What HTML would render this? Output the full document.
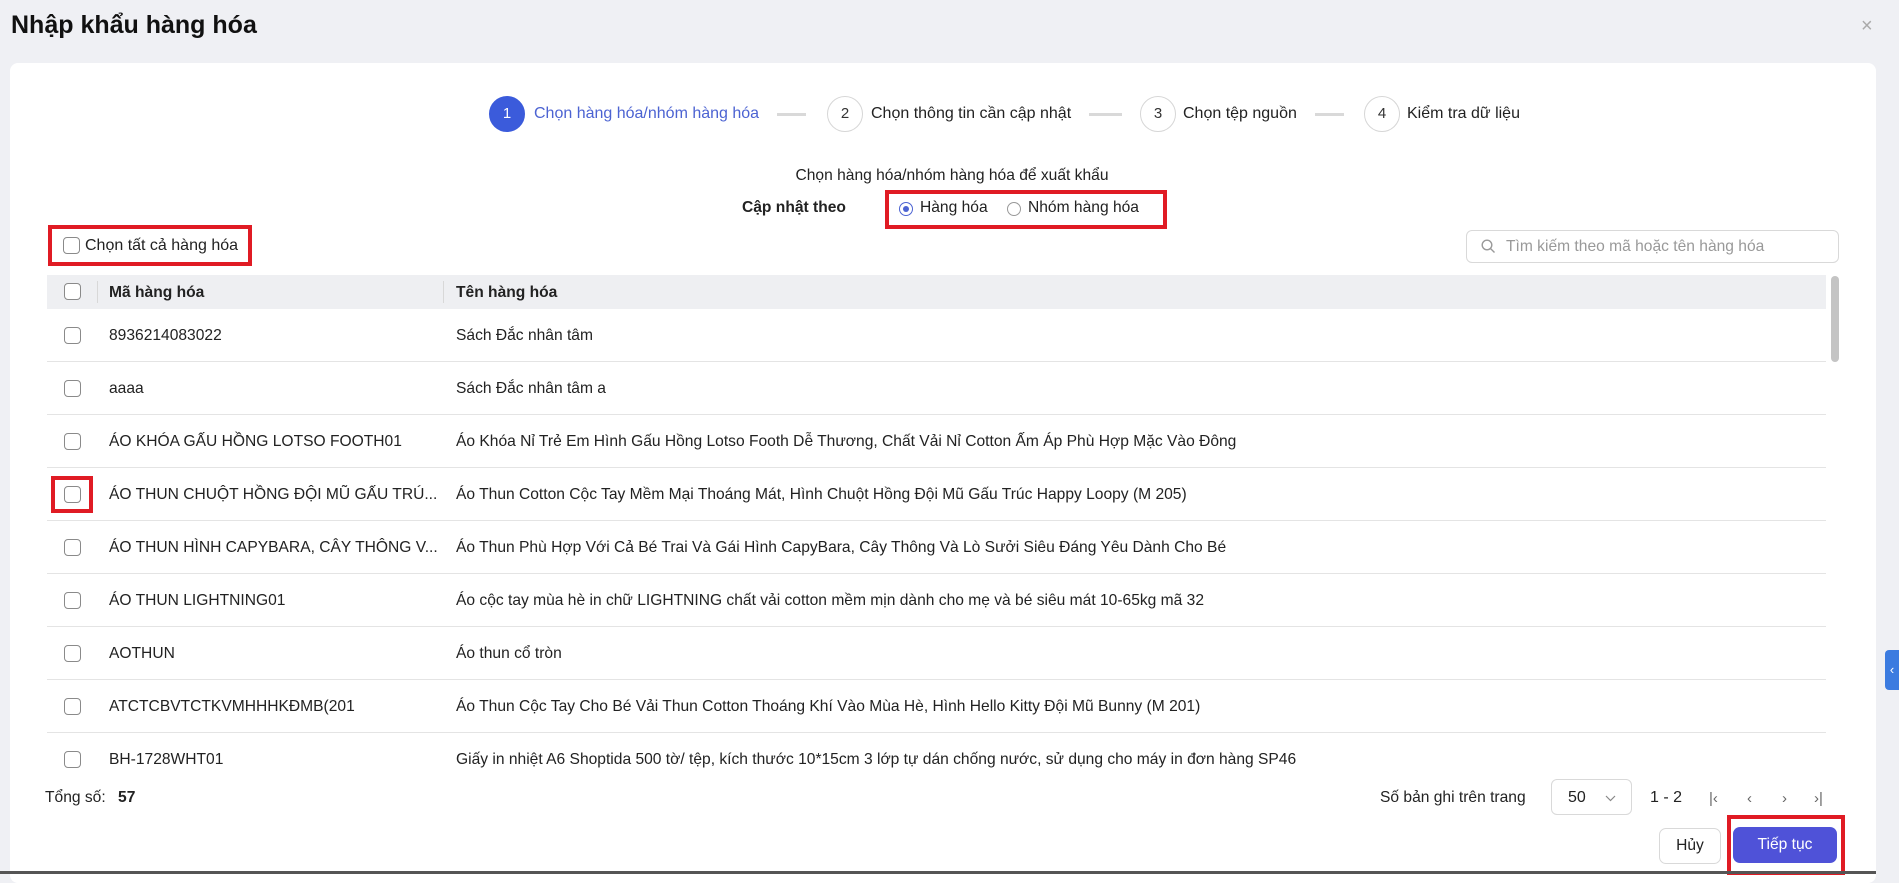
<!DOCTYPE html>
<html><head><meta charset="utf-8"><style>
*{box-sizing:border-box;margin:0;padding:0}
body{width:1899px;height:874px;background:#eff0f4;font-family:"Liberation Sans",sans-serif;color:#222;position:relative;overflow:hidden;font-size:15.6px}
.a{position:absolute;white-space:nowrap}
.card{position:absolute;left:10px;top:63px;width:1866px;height:820px;background:#fff;border-radius:8px}
.circ{position:absolute;width:36px;height:36px;border-radius:50%;border:1px solid #d6d6d6;text-align:center;line-height:34px;font-size:15px;color:#333;top:96px;background:#fff}
.line{position:absolute;top:113px;height:3px;background:#d9d9d9}
.st{position:absolute;top:105px;font-size:16px;color:#222}
.cb{position:absolute;width:17px;height:17px;border:1px solid #8a8a8a;border-radius:4px;background:#fff}
.red{position:absolute;border:4px solid #e01b24}
.row{position:absolute;left:47px;width:1779px;height:53px;border-bottom:1px solid #e4e4e4}
.row .cb{left:17px;top:18px}
.row .c1{position:absolute;left:62px;top:18px}
.row .c2{position:absolute;left:409px;top:18px}
.nav{position:absolute;top:790px;color:#666;font-size:15px}
</style></head><body>
<div class="a" style="left:11px;top:11px;font-size:25px;font-weight:bold;color:#111">Nhập khẩu hàng hóa</div>
<div class="a" style="left:1861px;top:15px;font-size:20px;color:#aaa">×</div>
<div class="card"></div>

<div class="circ" style="left:489px;background:#3b5bdb;border-color:#3b5bdb;color:#fff">1</div>
<div class="st" style="left:534px;color:#4c63d2">Chọn hàng hóa/nhóm hàng hóa</div>
<div class="line" style="left:777px;width:29px"></div>
<div class="circ" style="left:827px">2</div>
<div class="st" style="left:871px">Chọn thông tin cần cập nhật</div>
<div class="line" style="left:1089px;width:33px"></div>
<div class="circ" style="left:1140px">3</div>
<div class="st" style="left:1183px">Chọn tệp nguồn</div>
<div class="line" style="left:1315px;width:29px"></div>
<div class="circ" style="left:1364px">4</div>
<div class="st" style="left:1407px">Kiểm tra dữ liệu</div>

<div class="a" style="left:0;width:1904px;text-align:center;top:167px;font-size:15.6px">Chọn hàng hóa/nhóm hàng hóa để xuất khẩu</div>
<div class="a" style="left:742px;top:199px;font-weight:bold;font-size:15.6px">Cập nhật theo</div>
<div class="red" style="left:885px;top:190px;width:282px;height:39px"></div>
<div class="a" style="left:899px;top:202px;width:14px;height:14px;border:1px solid #4c63d2;border-radius:50%"><div style="margin:3px;width:6px;height:6px;border-radius:50%;background:#4c63d2"></div></div>
<div class="a" style="left:920px;top:199px">Hàng hóa</div>
<div class="a" style="left:1007px;top:202px;width:14px;height:14px;border:1px solid #999;border-radius:50%"></div>
<div class="a" style="left:1028px;top:199px">Nhóm hàng hóa</div>

<div class="red" style="left:48px;top:225px;width:204px;height:41px"></div>
<div class="cb" style="left:63px;top:237px"></div>
<div class="a" style="left:85px;top:237px;font-size:16px">Chọn tất cả hàng hóa</div>

<div class="a" style="left:1466px;top:230px;width:373px;height:33px;border:1px solid #d9d9d9;border-radius:6px"></div>
<svg class="a" style="left:1481px;top:239px" width="15" height="15" viewBox="0 0 15 15"><circle cx="6" cy="6" r="4.8" fill="none" stroke="#999" stroke-width="1.4"/><path d="M9.6 9.6L13.5 13.5" stroke="#999" stroke-width="1.4"/></svg>
<div class="a" style="left:1506px;top:238px;color:#999">Tìm kiếm theo mã hoặc tên hàng hóa</div>

<div class="a" style="left:47px;top:275px;width:1779px;height:34px;background:#eeeff2"></div>
<div class="a" style="left:97px;top:281px;width:1px;height:22px;background:#d8d8d8"></div>
<div class="a" style="left:443px;top:281px;width:1px;height:22px;background:#d8d8d8"></div>
<div class="cb" style="left:64px;top:283px"></div>
<div class="a" style="left:109px;top:284px;font-weight:bold">Mã hàng hóa</div>
<div class="a" style="left:456px;top:284px;font-weight:bold">Tên hàng hóa</div>
<div class="a" style="left:1831px;top:276px;width:8px;height:86px;background:#c4c4c4;border-radius:4px"></div>

<div class="row" style="top:309px"><div class="cb"></div><div class="c1">8936214083022</div><div class="c2">Sách Đắc nhân tâm</div></div>
<div class="row" style="top:362px"><div class="cb"></div><div class="c1">aaaa</div><div class="c2">Sách Đắc nhân tâm a</div></div>
<div class="row" style="top:415px"><div class="cb"></div><div class="c1">ÁO KHÓA GẤU HỒNG LOTSO FOOTH01</div><div class="c2">Áo Khóa Nỉ Trẻ Em Hình Gấu Hồng Lotso Footh Dễ Thương, Chất Vải Nỉ Cotton Ấm Áp Phù Hợp Mặc Vào Đông</div></div>
<div class="row" style="top:468px"><div class="cb"></div><div class="c1">ÁO THUN CHUỘT HỒNG ĐỘI MŨ GẤU TRÚ...</div><div class="c2">Áo Thun Cotton Cộc Tay Mềm Mại Thoáng Mát, Hình Chuột Hồng Đội Mũ Gấu Trúc Happy Loopy (M 205)</div></div>
<div class="row" style="top:521px"><div class="cb"></div><div class="c1">ÁO THUN HÌNH CAPYBARA, CÂY THÔNG V...</div><div class="c2">Áo Thun Phù Hợp Với Cả Bé Trai Và Gái Hình CapyBara, Cây Thông Và Lò Sưởi Siêu Đáng Yêu Dành Cho Bé</div></div>
<div class="row" style="top:574px"><div class="cb"></div><div class="c1">ÁO THUN LIGHTNING01</div><div class="c2">Áo cộc tay mùa hè in chữ LIGHTNING chất vải cotton mềm mịn dành cho mẹ và bé siêu mát 10-65kg mã 32</div></div>
<div class="row" style="top:627px"><div class="cb"></div><div class="c1">AOTHUN</div><div class="c2">Áo thun cổ tròn</div></div>
<div class="row" style="top:680px"><div class="cb"></div><div class="c1">ATCTCBVTCTKVMHHHKĐMB(201</div><div class="c2">Áo Thun Cộc Tay Cho Bé Vải Thun Cotton Thoáng Khí Vào Mùa Hè, Hình Hello Kitty Đội Mũ Bunny (M 201)</div></div>
<div class="row" style="top:733px;border-bottom:none"><div class="cb"></div><div class="c1">BH-1728WHT01</div><div class="c2">Giấy in nhiệt A6 Shoptida 500 tờ/ tệp, kích thước 10*15cm 3 lớp tự dán chống nước, sử dụng cho máy in đơn hàng SP46</div></div>
<div class="red" style="left:51px;top:476px;width:42px;height:37px"></div>

<div class="a" style="left:45px;top:789px">Tổng số: <b style="margin-left:8px">57</b></div>
<div class="a" style="left:1380px;top:789px">Số bản ghi trên trang</div>
<div class="a" style="left:1551px;top:779px;width:81px;height:36px;border:1px solid #d9d9d9;border-radius:6px"></div>
<div class="a" style="left:1568px;top:789px;font-size:16px">50</div>
<svg class="a" style="left:1605px;top:795px" width="11" height="7" viewBox="0 0 11 7"><path d="M1 1l4.5 4.5L10 1" fill="none" stroke="#888" stroke-width="1.2"/></svg>
<div class="a" style="left:1650px;top:789px;font-size:16px">1 - 2</div>
<div class="nav" style="left:1709px">|‹</div>
<div class="nav" style="left:1747px">‹</div>
<div class="nav" style="left:1782px">›</div>
<div class="nav" style="left:1814px">›|</div>

<div class="a" style="left:1659px;top:828px;width:62px;height:36px;border:1px solid #d9d9d9;border-radius:7px;text-align:center;line-height:34px">Hủy</div>
<div class="a" style="left:1733px;top:827px;width:104px;height:36px;background:#4f52d8;border-radius:7px;color:#fff;text-align:center;line-height:36px">Tiếp tục</div>
<div class="red" style="left:1727px;top:815px;width:118px;height:60px"></div>
<div class="a" style="left:0;top:871px;width:1876px;height:3px;background:#555"></div>
<div class="a" style="left:1885px;top:650px;width:14px;height:40px;background:#3b7be0;border-radius:4px 0 0 4px;color:#fff;font-size:13px;line-height:40px;text-align:center">‹</div>
</body></html>
